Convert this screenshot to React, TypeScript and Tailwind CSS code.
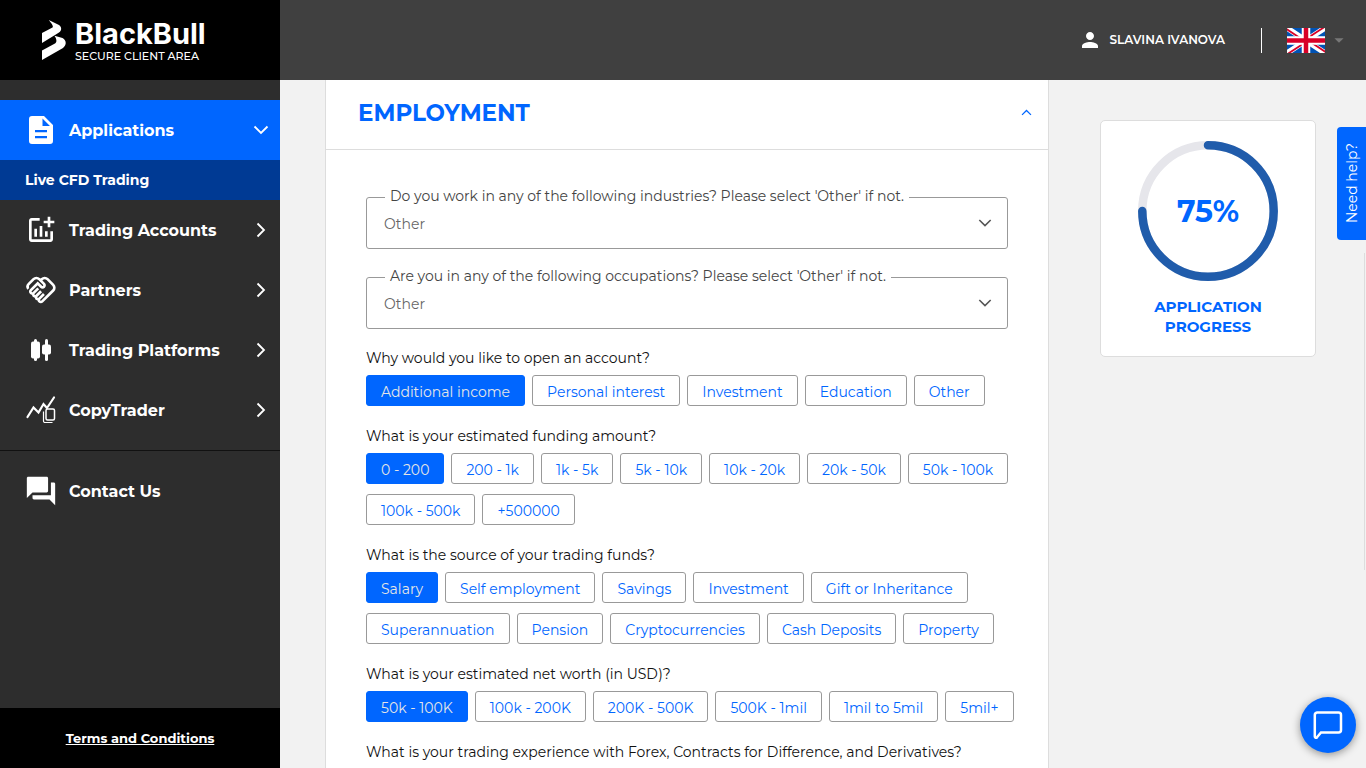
import { useState, type ReactNode } from "react";
import { MdAddchart, MdArrowDropDown, MdOutlineHandshake, MdPerson, MdQuestionAnswer } from "react-icons/md";

interface QuestionData {
  text: string;
  options: string[];
}

const questions: QuestionData[] = [
  {
    text: "Why would you like to open an account?",
    options: ["Additional income", "Personal interest", "Investment", "Education", "Other"],
  },
  {
    text: "What is your estimated funding amount?",
    options: [
      "0 - 200",
      "200 - 1k",
      "1k - 5k",
      "5k - 10k",
      "10k - 20k",
      "20k - 50k",
      "50k - 100k",
      "100k - 500k",
      "+500000",
    ],
  },
  {
    text: "What is the source of your trading funds?",
    options: [
      "Salary",
      "Self employment",
      "Savings",
      "Investment",
      "Gift or Inheritance",
      "Superannuation",
      "Pension",
      "Cryptocurrencies",
      "Cash Deposits",
      "Property",
    ],
  },
  {
    text: "What is your estimated net worth (in USD)?",
    options: ["50k - 100K", "100k - 200K", "200K - 500K", "500K - 1mil", "1mil to 5mil", "5mil+"],
  },
];

function Chevron({ className }: { className: string }) {
  return (
    <svg viewBox="0 0 16 16" className={className} fill="none" stroke="currentColor" strokeWidth="1.800">
      <path d="M1.500 4.500 8 11l6.500-6.500" />
    </svg>
  );
}

function LogoMark() {
  return (
    <svg viewBox="0 0 24 40" className="h-10 w-6 flex-none" fill="#fff">
      <path d="M6.800 0 16.500 4.800C20 6.800 20 10.500 17 12.500L13 15 0 23V13L10.500 7.500C11.800 6.300 9.500 3.500 6.800 0Z" />
      <path d="M12.500 15.800 20.500 18C24.700 20.500 24.700 25 21 28L0 40V30.500L12.500 23.800C15.500 22 14.500 19 12.500 15.800Z" />
    </svg>
  );
}

function DocumentIcon() {
  return (
    <svg viewBox="0 0 34 34" className="size-[34px]">
      <path
        fill="#fff"
        fillRule="evenodd"
        d="M8 3h12l9 9v16a3 3 0 0 1-3 3H8a3 3 0 0 1-3-3V6a3 3 0 0 1 3-3Zm10.500 2.500V13H26ZM11 17v2.200h12V17H11Zm0 6v2.200h12V23H11Z"
      />
    </svg>
  );
}

function CandlesIcon() {
  return (
    <svg viewBox="0 0 34 34" className="size-[34px]" fill="#fff">
      <rect x="10" y="6" width="3" height="22" rx="1.5" />
      <rect x="7" y="8.500" width="9" height="17" rx="2" />
      <rect x="21" y="6" width="3" height="22" rx="1.5" />
      <rect x="18" y="11.500" width="9" height="10" rx="2" />
    </svg>
  );
}

function CopyTraderIcon() {
  return (
    <svg viewBox="0 0 34 34" className="size-[34px]" fill="none" stroke="#fff">
      <path d="m3.500 24 6-9.500 5 5 5-8.500 3.500 4M24 13.500l6-9" strokeWidth="2.200" strokeLinecap="round" />
      <rect x="22" y="16" width="8.500" height="11" rx="1.500" strokeWidth="1.500" />
      <path d="M19.500 18.500V28a1.500 1.500 0 0 0 1.500 1.500h7.500" strokeWidth="1.200" />
    </svg>
  );
}

function FlagUK() {
  return (
    <svg viewBox="0 0 38 25" className="h-[25px] w-[38px]">
      <rect width="38" height="25" fill="#0052b4" />
      <path d="M0 0 38 25M38 0 0 25" stroke="#fff" strokeWidth="5.500" />
      <path d="M0 0 19 12.500" stroke="#d80027" strokeWidth="1.800" transform="translate(-.7 .9)" />
      <path d="M38 25 19 12.500" stroke="#d80027" strokeWidth="1.800" transform="translate(.7 -.9)" />
      <path d="M38 0 19 12.500" stroke="#d80027" strokeWidth="1.800" transform="translate(-.7 -.9)" />
      <path d="M0 25 19 12.500" stroke="#d80027" strokeWidth="1.800" transform="translate(.7 .9)" />
      <path d="M19 0v25M0 12.500h38" stroke="#fff" strokeWidth="8.500" />
      <path d="M19 0v25M0 12.500h38" stroke="#d80027" strokeWidth="4.500" />
    </svg>
  );
}

interface NavItemProps {
  icon: ReactNode;
  label: string;
  active?: boolean;
  arrow?: boolean;
}

function NavItem({ icon, label, active = false, arrow = true }: NavItemProps) {
  return (
    <a
      href="#"
      className={`flex h-[60px] items-center gap-[11px] pl-6 pr-[11px] font-bold text-white ${
        active ? "bg-[#0066ff]" : ""
      }`}
    >
      <span className="flex w-[34px] flex-none justify-center">{icon}</span>
      <span className="flex-1 pt-0.5">{label}</span>
      {arrow && <Chevron className={active ? "size-4" : "size-4 -rotate-90"} />}
    </a>
  );
}

function Sidebar() {
  return (
    <aside className="flex w-[280px] flex-none flex-col bg-[#2d2d2d]">
      <div className="flex h-20 flex-none items-center gap-[9px] bg-black pl-[42px] text-white">
        <LogoMark />
        <div className="pt-1">
          <p className="font-['Inter',sans-serif] text-[29px] leading-[28px] font-bold">BlackBull</p>
          <p className="text-[11px] leading-4 font-medium">SECURE CLIENT AREA</p>
        </div>
      </div>

      <nav className="flex flex-1 flex-col pt-5">
        <NavItem icon={<DocumentIcon />} label="Applications" active />
        <a href="#" className="flex h-10 items-center bg-[#003a94] pl-[25px] text-sm font-bold text-white">
          Live CFD Trading
        </a>
        <NavItem icon={<MdAddchart size={32} />} label="Trading Accounts" />
        <NavItem icon={<MdOutlineHandshake size={32} />} label="Partners" />
        <NavItem icon={<CandlesIcon />} label="Trading Platforms" />
        <NavItem icon={<CopyTraderIcon />} label="CopyTrader" />
        <hr className="my-2.5 border-[#111]" />
        <NavItem icon={<MdQuestionAnswer size={34} />} label="Contact Us" arrow={false} />
      </nav>

      <div className="flex h-[60px] flex-none items-center justify-center bg-black pt-0.5">
        <a href="#" className="text-[13px] font-bold text-white underline">
          Terms and Conditions
        </a>
      </div>
    </aside>
  );
}

function TopBar() {
  return (
    <header className="flex h-20 flex-none items-center justify-end bg-[#404040] pr-4 text-white">
      <a href="#" className="flex items-center gap-2 text-xs font-semibold">
        <MdPerson size={24} />
        SLAVINA IVANOVA
      </a>
      <span className="ml-9 h-[25px] w-px bg-white" />
      <button type="button" aria-label="Language" className="ml-[25px] flex items-center gap-[3px]">
        <FlagUK />
        <MdArrowDropDown size={22} className="text-[#777]" />
      </button>
    </header>
  );
}

function SelectField({ id, label }: { id: string; label: string }) {
  return (
    <div className="relative h-[52px] rounded-[3px] border border-[#999]">
      <label htmlFor={id} className="absolute -top-3 left-[18px] bg-white px-[5px] text-sm text-[#444]">
        {label}
      </label>
      <select
        id={id}
        className="h-full w-full appearance-none bg-transparent px-[17px] pt-0.5 text-sm text-[#666] outline-none"
      >
        <option>Other</option>
      </select>
      <Chevron className="pointer-events-none absolute top-[18px] right-[15px] size-[14px] text-[#555]" />
    </div>
  );
}

function Question({ text, options }: QuestionData) {
  const [selected, setSelected] = useState(0);

  return (
    <div role="group" aria-label={text} className="flex flex-col gap-1.5">
      <p className="text-sm leading-[22px] text-[#111]">{text}</p>
      <div className="-mr-2 flex flex-wrap gap-x-[7px] gap-y-2.5">
        {options.map((option, index) => (
          <button
            key={option}
            type="button"
            aria-pressed={index === selected}
            onClick={() => setSelected(index)}
            className={`h-[31px] rounded-[3px] border px-3.5 pt-0.5 text-sm ${
              index === selected
                ? "border-[#0066ff] bg-[#0066ff] text-[#e6e6e6]"
                : "border-[#999] bg-white text-[#0066ff]"
            }`}
          >
            {option}
          </button>
        ))}
      </div>
    </div>
  );
}

function ProgressCard({ percent }: { percent: number }) {
  return (
    <div className="mt-10 flex w-[216px] flex-none flex-col items-center self-start rounded-[5px] border border-[#ddd] bg-white pt-5 pb-[19px]">
      <div className="relative flex size-[140px] items-center justify-center">
        <svg viewBox="0 0 140 140" className="absolute inset-0" fill="none" strokeWidth="8.500">
          <circle cx="70" cy="70" r="65.700" stroke="#e6e6eb" />
          <circle
            cx="70"
            cy="70"
            r="65.700"
            stroke="#205cab"
            strokeLinecap="round"
            pathLength={100}
            strokeDasharray={`${percent} 100`}
            transform="rotate(-90 70 70)"
          />
        </svg>
        <span className="text-[30px] font-bold text-[#0066ff]">{percent}%</span>
      </div>
      <p className="mt-4 w-[120px] text-center text-[15px] leading-5 font-bold text-[#0066ff]">
        APPLICATION PROGRESS
      </p>
    </div>
  );
}

export default function App() {
  return (
    <div className="flex h-screen overflow-hidden bg-[#f2f2f2] font-['Montserrat','Inter',sans-serif]">
      <Sidebar />

      <div className="flex min-w-0 flex-1 flex-col">
        <TopBar />
        <main className="flex min-h-0 flex-1 gap-[51px] overflow-hidden pr-[50px] pl-[45px]">
          <section className="min-w-0 flex-1 border-x border-[#ddd] bg-white">
            <div className="flex h-[70px] items-center justify-between border-b border-[#ddd] pr-4 pb-1 pl-8">
              <h2 className="pt-0.5 text-[23px] font-bold text-[#0066ff]">EMPLOYMENT</h2>
              <button type="button" aria-label="Collapse section" className="text-[#0066ff]">
                <Chevron className="size-[11px] rotate-180" />
              </button>
            </div>

            <form className="flex flex-col px-10 pt-[47px]">
              <div className="flex flex-col gap-7">
                <SelectField
                  id="industry"
                  label="Do you work in any of the following industries? Please select 'Other' if not."
                />
                <SelectField
                  id="occupation"
                  label="Are you in any of the following occupations? Please select 'Other' if not."
                />
              </div>
              <div className="mt-[18px] flex flex-col gap-[19px]">
                {questions.map((question) => (
                  <Question key={question.text} {...question} />
                ))}
                <p className="text-sm leading-[22px] text-[#111]">
                  What is your trading experience with Forex, Contracts for Difference, and Derivatives?
                </p>
              </div>
            </form>
          </section>

          <ProgressCard percent={75} />
        </main>
      </div>

      {/* Floating help tab and chat launcher */}
      <button
        type="button"
        className="fixed top-[127px] right-0 flex h-[113px] w-[29px] items-center justify-center rounded-l-[4px] bg-[#0066ff] text-sm text-white"
      >
        <span className="rotate-180 [writing-mode:vertical-rl]">Need help?</span>
      </button>
      <div className="fixed top-[253px] right-0 h-[317px] w-0.5 border-l border-[#ddd]" />
      <button
        type="button"
        aria-label="Open chat"
        className="fixed right-2.5 bottom-[15px] flex size-14 items-center justify-center rounded-full bg-[#0066ff] shadow-[0_2px_8px_rgba(0,0,0,0.4)]"
      >
        <svg viewBox="0 0 30 30" className="size-[30px]" fill="none" stroke="#fff" strokeWidth="2.500">
          <path d="M4 2.500h21.500a2.500 2.500 0 0 1 2.500 2.500v15a2.500 2.500 0 0 1-2.500 2.500H8l-4 4.800c-.8.900-2.200.5-2.200-.8V5A2.500 2.500 0 0 1 4 2.500Z" />
        </svg>
      </button>
    </div>
  );
}
